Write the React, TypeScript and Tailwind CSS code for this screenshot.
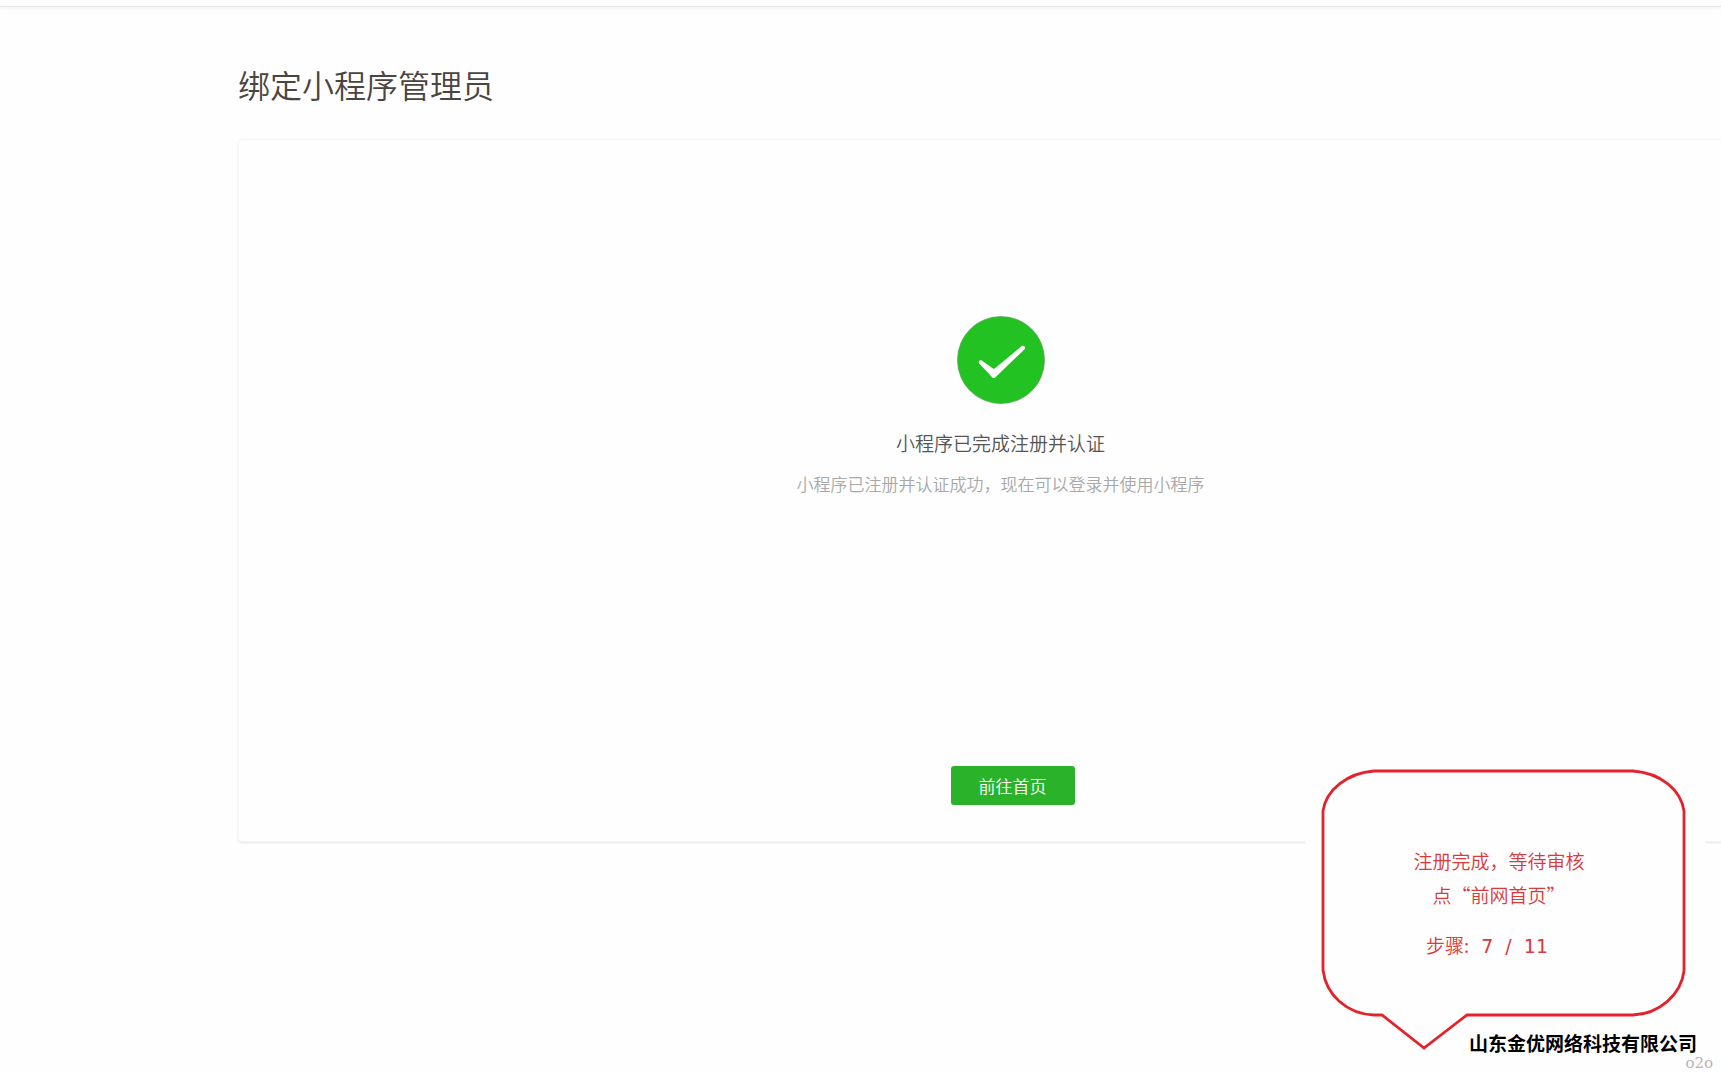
import React from "react";

interface Step {
  current: number;
  total: number;
  lines: string[];
}

const STEP: Step = {
  current: 7,
  total: 11,
  lines: ["注册完成，等待审核", "点“前网首页”"],
};

const SuccessIcon: React.FC = () => (
  <svg viewBox="0 0 88 88" className="w-[88px] h-[88px]" aria-hidden="true">
    <circle cx="44" cy="44" r="43.6" fill="#23c223" stroke="#5f9a5f" strokeWidth="0.6" />
    <path
      d="M22.2 47.4C20.8 45.6 22.8 43.4 25 44.8L36 52.4Q37 53 38 52.2L64.6 30.2C66.8 28.8 69 31 67.6 33.2L38.2 61.4Q36.8 62.8 35.4 61.4Z"
      fill="#fff"
    />
  </svg>
);

// Speech bubble pointing down at the next action, laid over the page.
const StepCallout: React.FC<{ step: Step }> = ({ step }) => (
  <aside className="absolute right-4 bottom-0 w-[400px] h-[323px] bg-[#fefefe]">
    <svg viewBox="0 0 400 323" className="absolute inset-0 w-full h-full" aria-hidden="true">
      <path
        d="M69 21H328C356 23 376 40 379 61V221C376 245 354 264 328 265H162L119 298L77 265H69C42 264 21 245 18 220V61C21 40 42 23 69 21Z"
        fill="#fefefe"
        stroke="#e3222b"
        strokeWidth="2.8"
      />
    </svg>
    <div className="relative pt-[94px] pr-3 text-center text-[19px] leading-[34px] font-[350] text-[#d93a3a]">
      {step.lines.map((line) => (
        <p key={line}>{line}</p>
      ))}
      <p className="mt-4 pr-6 whitespace-pre font-normal font-['DejaVu_Sans','Noto_Sans_CJK_SC',sans-serif]">
        <span className="font-[350] font-['Noto_Sans_CJK_SC',sans-serif]">步骤:</span>
        {"  "}{step.current}  /  {step.total}
      </p>
    </div>
    <footer className="absolute right-2 bottom-4 text-[19px] leading-7 font-bold text-black">
      山东金优网络科技有限公司
    </footer>
    <span className="absolute -right-2 bottom-0 text-[15px] leading-5 text-[#b5b5b5] font-['DejaVu_Serif',serif]">
      o2o
    </span>
  </aside>
);

const App: React.FC = () => {
  return (
    <div
      lang="zh-CN"
      className="relative min-h-screen overflow-hidden bg-[#fefefe] font-['Noto_Sans_CJK_SC',sans-serif]"
    >
      <header className="h-[7px] border-b border-[#e3e5e9] shadow-[0_1px_4px_rgba(0,0,0,0.06)]" />

      <main className="pl-[238px]">
        <h1 className="pt-[53px] pb-[31px] text-[32px] leading-[48px] font-[350] text-[#4a4541]">
          绑定小程序管理员
        </h1>

        {/* The card runs past the right edge of the window. */}
        <section className="-mr-[42px] flex flex-col items-center rounded border border-[#f3f5f9] pt-44 pb-9 shadow-[0_1px_2px_rgba(120,130,160,0.22)]">
          <SuccessIcon />
          <h2 className="mt-[23px] text-[19px] leading-8 font-[350] text-[#555]">
            小程序已完成注册并认证
          </h2>
          <p className="mt-[9px] text-[17px] leading-8 font-[350] text-[#a8a8a8]">
            小程序已注册并认证成功，现在可以登录并使用小程序
          </p>
          <div className="mt-[266px] pl-6">
            <button
              type="button"
              className="h-[39px] w-[124px] rounded-[3px] bg-[#2bb22b] text-[17px] font-[350] text-white"
            >
              前往首页
            </button>
          </div>
        </section>
      </main>

      <StepCallout step={STEP} />
    </div>
  );
};

export default App;
